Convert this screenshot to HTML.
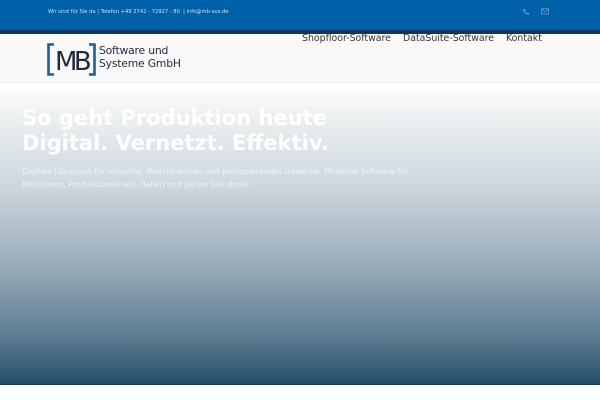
<!DOCTYPE html>
<html><head><meta charset="utf-8"><style>
*{margin:0;padding:0;box-sizing:border-box}
body{width:600px;height:400px;overflow:hidden;background:#fdfefe;font-family:"DejaVu Sans","Liberation Sans",sans-serif;position:relative}
.top{position:absolute;left:0;top:0;width:600px;height:30px;background:#0061ab}
.top .t{position:absolute;left:48px;top:9px;font-size:5.2px;color:#cfe0f0}
.strip{position:absolute;left:0;top:30px;width:600px;height:4px;background:#0d3a5c}
.hdr{position:absolute;left:0;top:34px;width:600px;height:49px;background:#f9f9f9;border-bottom:1px solid #eee}
.nav{position:absolute;top:33px;font-size:9.4px;color:#333}
.hero{position:absolute;left:0;top:83px;width:600px;height:301px;background:linear-gradient(#ffffff 0%,#eef1f2 10%,#ccd6dc 35%,#8fa4b3 65%,#5a7a8f 85%,#234e68 100%)}
.line{position:absolute;left:0;top:384px;width:600px;height:1px;background:#1c3b4e}
h1{position:absolute;left:22px;top:106px;font-size:21px;line-height:25px;font-weight:bold;color:#fff}
p{position:absolute;left:22px;top:166px;font-size:7.75px;line-height:12.5px;color:#eef2f5;width:395px}
</style></head><body>
<div class="top"><div class="t">Wir sind für Sie da | Telefon +49 2742 - 72927 - 80 &nbsp;| info@mb-sus.de</div>
<svg style="position:absolute;left:522px;top:8px" width="8" height="8" viewBox="0 0 8 8"><path d="M1.5 1 L3 1 L3.5 2.8 L2.6 3.4 Q3.5 5 4.8 5.5 L5.3 4.6 L7 5 L7 6.5 Q3 7 1.2 2.5 Z" fill="#6f9cc8"/></svg>
<svg style="position:absolute;left:541px;top:8px" width="8" height="7" viewBox="0 0 8 7"><rect x="0.5" y="0.8" width="7" height="5.2" fill="none" stroke="#6f9cc8" stroke-width="0.8"/><path d="M0.6 1 L4 4 L7.4 1" fill="none" stroke="#6f9cc8" stroke-width="0.8"/></svg>
</div>
<div class="strip"></div>
<div class="hdr">
<svg style="position:absolute;left:47px;top:9px" width="50" height="33" viewBox="0 0 50 33">
<path d="M7 1.5 H1.5 V31.5 H7" fill="none" stroke="#1f5f96" stroke-width="2.6"/>
<path d="M42 1.5 H47.5 V31.5 H42" fill="none" stroke="#1f5f96" stroke-width="2.6"/>
<text x="8" y="27" font-family="DejaVu Sans" font-size="26" fill="#1f2a3a" letter-spacing="-3.5">MB</text>
</svg>
<div style="position:absolute;left:99px;top:11px;font-size:10.8px;line-height:12.5px;color:#1f2a3a;letter-spacing:-0.2px">Software und<br>Systeme GmbH</div>
</div>
<div class="nav" style="left:302px">Shopfloor-Software</div>
<div class="nav" style="left:403px">DataSuite-Software</div>
<div class="nav" style="left:506px">Kontakt</div>
<div class="hero"></div>
<div class="line"></div>
<h1>So geht Produktion heute<br>Digital. Vernetzt. Effektiv.</h1>
<p>Digitale Lösungen für Industrie, Maschinenbau und produzierendes Gewerbe. Moderne Software für Maschinen, Produktionslinien, Hallen und ganze Standorte.</p>
</body></html>
